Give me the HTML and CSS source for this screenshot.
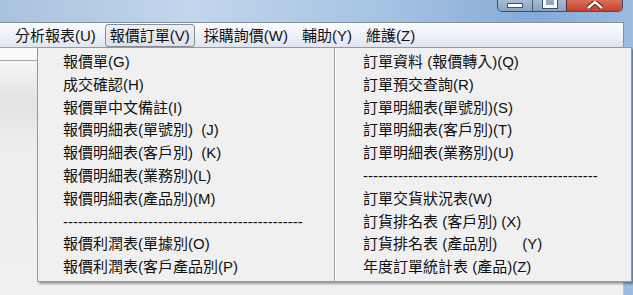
FILE: index.html
```html
<!DOCTYPE html>
<html lang="zh-Hant">
<head>
    <meta charset="UTF-8">
    <title>報價訂單</title>
    <link rel="stylesheet" href="styles.css">
</head>
<body>
    <div class="window">
        <div class="titlebar">
            <div class="caption-buttons">
                <div class="cap-btn cap-min"><span class="min-glyph"></span></div>
                <div class="cap-btn cap-max"><span class="max-glyph"></span></div>
                <div class="cap-btn cap-close">
                    <svg width="20" height="8" viewBox="0 0 20 8">
                        <path d="M3 7 L10 1 L17 7" fill="none" stroke="#5a1a10" stroke-width="4.5"/>
                        <path d="M3 7 L10 1 L17 7" fill="none" stroke="#ffffff" stroke-width="2.5"/>
                    </svg>
                </div>
            </div>
        </div>

        <div class="frame">
            <div class="menubar">
                <span class="menu-item">分析報表(U)</span>
                <span class="menu-item active">報價訂單(V)</span>
                <span class="menu-item">採購詢價(W)</span>
                <span class="menu-item">輔助(Y)</span>
                <span class="menu-item">維護(Z)</span>
            </div>
            <div class="client">
                <div class="side-strip">
                    <div class="strip-top"></div>
                    <div class="strip-body"></div>
                </div>
            </div>
        </div>

        <!-- dropdown of 報價訂單(V) -->
        <div class="dropdown">
            <ul class="col col-left">
                <li>報價單(G)</li>
                <li>成交確認(H)</li>
                <li>報價單中文備註(I)</li>
                <li>報價明細表(單號別)&nbsp;&nbsp;(J)</li>
                <li>報價明細表(客戶別)&nbsp;&nbsp;(K)</li>
                <li>報價明細表(業務別)(L)</li>
                <li>報價明細表(產品別)(M)</li>
                <li class="dashes">------------------------------------------------</li>
                <li>報價利潤表(單據別(O)</li>
                <li>報價利潤表(客戶產品別(P)</li>
            </ul>
            <ul class="col col-right">
                <li>訂單資料 (報價轉入)(Q)</li>
                <li>訂單預交查詢(R)</li>
                <li>訂單明細表(單號別)(S)</li>
                <li>訂單明細表(客戶別)(T)</li>
                <li>訂單明細表(業務別)(U)</li>
                <li class="dashes">-----------------------------------------------</li>
                <li>訂單交貨狀況表(W)</li>
                <li>訂貨排名表 (客戶別) (X)</li>
                <li>訂貨排名表 (產品別)&nbsp;&nbsp;&nbsp;&nbsp;&nbsp;&nbsp;(Y)</li>
                <li>年度訂單統計表 (產品)(Z)</li>
            </ul>
        </div>
    </div>
</body>
</html>
```

FILE: styles.css
```css
* {
    margin: 0;
    padding: 0;
    box-sizing: border-box;
}

body {
    font-family: "Liberation Sans", "Noto Sans CJK TC", sans-serif;
    font-size: 15px;
    color: #111111;
    overflow: hidden;
}

.window {
    position: relative;
    width: 633px;
    height: 295px;
    display: flex;
    flex-direction: column;
    background: linear-gradient(90deg, #a9c2dd 0%, #c2d6ec 30%, #a6c3e3 60%, #86abd6 85%, #9cbce0 100%);
}

/* Title bar */
.titlebar {
    height: 22px;
    display: flex;
    justify-content: flex-end;
    padding-right: 10px;
}

.caption-buttons {
    display: flex;
    height: 12px;
    border: 1px solid #3d4e68;
    border-top: none;
    border-radius: 0 0 5px 5px;
    overflow: hidden;
}

.cap-btn {
    display: flex;
    justify-content: center;
    align-items: flex-end;
}

.cap-min {
    width: 34px;
    background: linear-gradient(#a9bcd3, #8aa2c2);
}

.cap-max {
    width: 34px;
    border-left: 1px solid #4d5e78;
    background: linear-gradient(#a9bcd3, #8aa2c2);
}

.cap-close {
    width: 56px;
    border-left: 1px solid #5a2a24;
    background: linear-gradient(#d9715d, #c3402c);
    align-items: flex-start;
    padding-top: 1px;
}

.min-glyph {
    width: 16px;
    height: 5px;
    margin-bottom: 3px;
    background: #ffffff;
    border: 1px solid #3f4f66;
}

.max-glyph {
    width: 14px;
    height: 10px;
    margin-bottom: 3px;
    border: 3px solid #ffffff;
    border-top: none;
    outline: 1px solid #3f4f66;
    background: #93abc8;
}

/* Frame */
.frame {
    flex: 1;
    display: flex;
    flex-direction: column;
    margin-right: 9px;
}

.menubar {
    height: 25px;
    display: flex;
    align-items: center;
    padding-left: 10px;
    gap: 4px;
    border-top: 1px solid #7f90a8;
    border-right: 1px solid #7f90a8;
    background: linear-gradient(#fdfdff, #eef1f8 50%, #dfe4f0);
}

.menu-item {
    height: 23px;
    line-height: 21px;
    padding: 0 4px;
    border: 1px solid transparent;
    border-radius: 3px;
    white-space: nowrap;
}

.menu-item.active {
    border-color: #878c95;
    background: linear-gradient(#eef0f3, #dde1e7);
}

.client {
    flex: 1;
    display: flex;
    background: #f0f0f0;
    border-top: 1px solid #a0a0a0;
    border-right: 1px solid #b8c4d4;
}

.side-strip {
    width: 37px;
    display: flex;
    flex-direction: column;
}

.strip-top {
    height: 13px;
    background: #fafafa;
    border-bottom: 1px solid #a9a9a9;
}

.strip-body {
    flex: 1;
    background: linear-gradient(#f6f6f6, #e2e2e2 40px, #eeeeee 90px, #f0f0f0);
}

/* Dropdown menu */
.dropdown {
    position: absolute;
    left: 37px;
    top: 47px;
    width: 595px;
    height: 235px;
    display: flex;
    background: #f0f0f0;
    border: 1px solid #979797;
    box-shadow: 2px 2px 2px rgba(0, 0, 0, 0.35);
}

.col {
    list-style: none;
    padding-top: 3px;
}

.col li {
    height: 22.8px;
    line-height: 22.8px;
    white-space: nowrap;
}

.col-left {
    width: 297px;
    padding-left: 25px;
    border-right: 1px solid #a0a0a0;
}

.col-right {
    flex: 1;
    padding-left: 27px;
    border-left: 1px solid #ffffff;
}

.dashes {
    overflow: hidden;
}
```
